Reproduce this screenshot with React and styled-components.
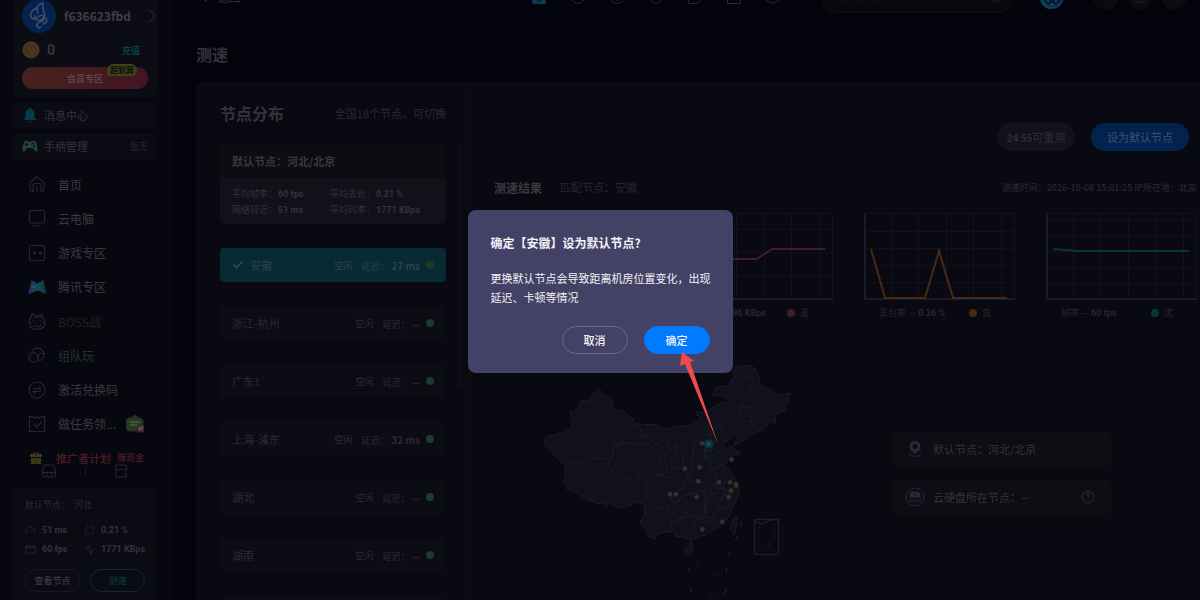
import React, { useState } from 'react';
import styled, { createGlobalStyle } from 'styled-components';
import { ChevronRight, ChevronLeft, Search, Gauge, Unlink, AppWindow, Activity, Check, CircleQuestionMark } from 'lucide-react';

const menu = [
    { label: '首页', icon: 'home' },
    { label: '云电脑', icon: 'pc' },
    { label: '游戏专区', icon: 'game' },
    { label: '腾讯专区', icon: 'tencent' },
    { label: 'BOSS战', icon: 'boss', color: '#2b1d23' },
    { label: '组队玩', icon: 'team', color: '#28322f' },
    { label: '激活兑换码', icon: 'code' },
    { label: '做任务领...', icon: 'task', gift: true },
];

const nodes = [
    { name: '安徽', delay: '27 ms', dot: '#21392b' },
    { name: '浙江-杭州', delay: '--' },
    { name: '广东1', delay: '--' },
    { name: '上海-浦东', delay: '32 ms' },
    { name: '湖北', delay: '--' },
    { name: '湖南', delay: '--' },
    { name: '江苏', delay: '--' },
];

const charts = [
    { label: '延迟', value: '27 ms', level: '优', color: '#08343b', rows: [17, 34, 51, 68], line: '7,36 143,36' },
    { label: '码率', value: '896 KBps', level: '差', color: '#421b2f', rows: [16, 39, 62], line: '7,46 68,46 75,46 90,36 98,36 143,36' },
    { label: '丢包率', value: '0.26 %', level: '良', color: '#482a12', rows: [18, 35, 52, 69], line: '7,36 21,85 61,85 75,38 89,85 143,85' },
    { label: '帧率', value: '60 fps', level: '优', color: '#08343b', rows: [7, 22, 38, 54, 70], line: '7,36 20,37 32,38 143,38' },
];

const points = [
    [516, 265], [605, 314], [465, 341], [509, 337], [505, 378], [567, 382], [600, 382], [618, 387], [619, 392],
    [603, 407], [596, 426], [420, 418], [438, 418], [500, 426], [577, 500], [517, 523],
];

function MenuIcon({ type }) {
    if (type === 'home') return (
        <svg viewBox="0 0 18 18"><path d="M2 7.2 9 1.8l7 5.400V15q0 1.500-1.500 1.500H13V10q0-1.500-1.500-1.500h-5Q5 8.500 5 10v6.500H3.500Q2 16.500 2 15zM9 11.500v5" /></svg>
    );
    if (type === 'pc') return (
        <svg viewBox="0 0 18 18"><rect x="1.500" y="1.500" width="15" height="12.500" rx="1.500" /><path d="M5 16.800h8" /></svg>
    );
    if (type === 'game') return (
        <svg viewBox="0 0 18 18"><rect x="1.500" y="1.500" width="15" height="15" rx="1.500" /><path d="M4.500 9h4M6.500 7v4" /><circle cx="12.500" cy="9" r="1" /></svg>
    );
    if (type === 'tencent') return (
        <svg viewBox="0 0 18 18">
            <defs>
                <linearGradient id="tx" x1="0" x2="1">
                    <stop offset="0" stopColor="#1f2560" />
                    <stop offset=".4" stopColor="#134759" />
                    <stop offset="1" stopColor="#0a4247" />
                </linearGradient>
            </defs>
            <path stroke="none" fill="url(#tx)" d="M3.500 2 9 5.500 15.500 2 18 16l-8-3.500L0 16z" />
            <path stroke="none" fill="#245c63" d="m4 7 4 1-3 3z" />
        </svg>
    );
    if (type === 'boss') return (
        <svg viewBox="0 0 18 18"><path d="M3.500 4.500 4 1.500 6.500 3 7 5.500l2-.5.500-2L11 5l3-2.500-.5 2.500q3.500 1.500 3.500 5 0 7-8 7.500-8-.5-8-7 0-3.500 2.500-6zM5 8v1.500m7.500-2v2M5.500 13l2 1.500h4l2-2.500M3 10.500v1.500m12-3v1.500M7 10l1 1" /></svg>
    );
    if (type === 'team') return (
        <svg viewBox="0 0 18 18"><path d="M3.500 6.500A6.500 6.500 0 1 1 11 15" /><circle cx="5.500" cy="11.500" r="4.800" /><path d="M3 11h1.500M8 8.500l3 .5-1.500 3M12 7.500h3" /></svg>
    );
    if (type === 'code') return (
        <svg viewBox="0 0 18 18"><circle cx="9" cy="9" r="8" /><path d="M5 7.800h8L10.500 5.500M13 10.500H5l2.500 2.300" /></svg>
    );
    return (
        <svg viewBox="0 0 18 18"><path d="M1.500 1.500h3l2 2 2.500-2 2.500 2 2-2h3v15h-15zM5.500 9l3 3 5-5" /></svg>
    );
}

function ChinaMap() {
    return (
        <MapSvg viewBox="0 0 810 735" role="img" aria-label="节点地图">
            <g fill="#11111d" stroke="#1b1b29" strokeWidth="3" strokeLinejoin="round">
                <path d="M40 262 48 256 46 246 60 241 78 239 84 234 102 232 124 216 128 200 123 186 121 170 134 167 145 166 149 150 152 138 165 136 179 136 184 124 192 112 200 110 206 102 212 106 213 117 228 122 240 132 249 142 247 156 250 163 268 165 285 170 298 184 308 190 314 203 322 206 340 208 365 208 382 210 398 218 415 222 428 216 452 212 474 213 490 208 502 198 512 196 507 184 500 180 500 168 512 172 530 170 545 160 555 155 574 143 600 140 592 132 580 125 565 120 550 125 549 118 558 96 572 93 588 95 602 84 604 74 614 67 611 56 607 48 614 36 632 34 650 31 664 34 678 43 682 58 688 72 692 94 708 98 730 108 734 116 752 121 764 117 781 115 776 128 774 142 768 150 764 166 750 170 738 176 736 196 735 208 724 197 712 212 698 222 690 228 672 233 660 244 642 256 624 264 612 272 616 260 624 246 622 238 606 240 596 252 588 262 578 266 580 277 592 280 606 276 618 286 630 291 631 298 614 300 600 308 588 320 582 334 596 342 606 356 612 370 621 384 614 392 628 402 625 414 618 440 606 458 604 472 594 486 584 502 570 510 560 522 540 530 526 540 508 544 498 550 486 550 486 566 480 570 479 552 466 550 452 544 440 545 428 530 412 530 392 536 378 540 378 552 366 548 354 543 352 528 343 518 334 510 331 500 338 490 343 478 344 462 340 446 316 440 304 450 286 456 275 460 262 458 252 450 240 446 230 446 227 454 222 445 204 446 190 440 170 434 146 416 128 406 110 402 108 392 100 382 106 362 104 342 110 336 96 320 86 316 74 302 66 290 50 276z" />
                <path d="M470 576l12-8 9 4-2 14-10 15-14-1-3-12zM613 488l10-1-2 20-8 32-11-15 0-18z" />
                <g fill="none">
                    <path d="M108 338l12-16 40 0 24-14 34 4 14-4 14 4 4-32 24-10 10-26 24-24 8-14M244 270l56-6 24 6 30-2 24 16 14 18-2 20-8 18-12 6 18 16-14 2-20-16-20-8-8 10 8 18-20 10-26-10-34-14-18-20-2-24" />
                    <path d="M322 206l10 16-2 18 16 8 16-4 14 22 20 14 10 18-6 22 12 14-4 16-14 12-16-4M330 240l20-4M376 270l20-16 20 12 0 18 14-2 6-18 8 12-8 26-16 10 4 22 26 8 12-14-6-22 14-8 12 10 10-20-8-18 20-12 10-10 24-10 16-4" />
                    <path d="M540 258l2-22-10-14 12-10 14 10 10-16 14 8-8 16 18 14M595 218l36-12 20-8 14 2-2-20-18-4 4-20-24-4M556 262l-18 2-12 16 0 30-18 22-16 4-10 16-10 10 2 14-20 8-22-16-28 0-16-12" />
                    <path d="M612 50l16 8 2 10 18 0 22-2 0 14-10 12 0 18-28 18 6 18 16 8 0 10M638 154l-14 0 4 16 10 10M638 154l30 4 16 18 16 4 14 14 22 2M668 200l4 24M486 350l2-32 4-38 16-14M524 282l0 28 24-4 14-16 18-4M526 310l16 14 0 14 18 4 16-18M508 336l28 12 14-6 8 14-4 16 14 14 10 14 18 6 12-10 16 2M486 352l-16 12 6 16 22 6 26-6 22 12 10-6 12 18-12 12-26-10-24 4-20 8-24 0-14 18M464 380l-10 24-20 10-12 14 8 18 22-16 18 12-8 14 12 14-8 16-26-2-20-12-6-14 8-14M462 424l20-12 24 8 18-10 4 24-6 44-18 12-24-10M548 414l-16 20-4 28 2 24 20 4 12-28 12-36 14-12-14-14-24-2M576 416l14 8 8 22-10 14-24 2M346 372l4 26-2 34 18 10 18 16 20-2 10 18-10 12 18 12 4 22M426 502l20-8 26-8 24-6M500 486l-6 22-20 26-8 14M530 486l-26 4 18 12 20-6 18 12 14-10M556 360l20-6 10 20-6 26" />
                </g>
            </g>
            <g fill="none" stroke="#242433" strokeWidth="3">
                <path d="M635 500l-3 16M623 544l-7 14M601 588l-6 16M589 636v18M473 634l6 14M483 698v14M588 702l-5 16" />
                <path d="M674 493h72v105h-72zM676 498l16 8 26-8 14-4M746 496l-10 12" />
                <path d="M690 512l-3 10M688 540l3 10M734 516l-2 12M734 542l-3 12M722 564l-8 12M706 584l-8 4" strokeWidth="2" />
                <path d="M500 620l8 3M498 632l12 2M556 628l6 8M560 556h4M644 478h5M548 660h12M530 720h20M556 712l12-6M536 728l12 3M566 720h8" strokeDasharray="3 4" />
            </g>
            <g fill="#3d2e28">
                {points.map(([x, y]) => <circle key={`${x}-${y}`} cx={x} cy={y} r="7" />)}
            </g>
            <circle cx="536" cy="267" r="14" fill="#0b353d" />
            <circle cx="536" cy="267" r="6" fill="#2a474e" />
            <path d="M527 280c-14 10 32 12 18 0" fill="none" stroke="#0b353d" strokeWidth="3" />
        </MapSvg>
    );
}

function Chart({ data }) {
    return (
        <ChartBox>
            <svg viewBox="0 0 151 87" preserveAspectRatio="none">
                <g stroke="#11111d" strokeWidth="1">
                    {[27, 54, 82, 109, 137, 150].map(x => <line key={x} x1={x + 0.5} x2={x + 0.5} y1="0" y2="86" />)}
                    {[0, ...data.rows].map(y => <line key={y} x1="0" x2="151" y1={y + 0.5} y2={y + 0.5} />)}
                </g>
                <path d="M1 0v86h150" fill="none" stroke="#1a1a2c" strokeWidth="2" />
                <polyline points={data.line} fill="none" stroke={data.color} strokeWidth="2" />
            </svg>
            <Legend>
                <span>{data.label} — <Num>{data.value}</Num></span>
                <Dot color={data.color} />
                {data.level}
            </Legend>
        </ChartBox>
    );
}

export default function App() {
    const [selected, setSelected] = useState('安徽');
    const [open, setOpen] = useState(true);
    return (
        <Page>
            <GlobalStyle />
            <Sidebar>
                <Profile>
                    <User>
                        <Avatar viewBox="0 0 34 34">
                            <circle cx="17" cy="17" r="17" fill="#04224f" />
                            <path d="M21 4c-6 1-7 6-5 10m5-10c-1 4 0 6 1 9 2 5-1 7-4 8-4 1-6-1-5-4M14 9c-5 3-7 7-4 10 2 2 4 1 6-1 3-3 6-2 6 1 0 4-4 3-6 5-3 3 1 6 3 4m5-9c2 3 0 5-3 6" fill="none" stroke="#3c4e68" strokeWidth="1.600" strokeLinecap="round" />
                        </Avatar>
                        <strong>f636623fbd</strong>
                        <ChevronRight size={26} strokeWidth={1.2} />
                    </User>
                    <Balance>
                        <svg viewBox="0 0 18 18"><circle cx="9" cy="9" r="8.500" fill="#4a381f" /><circle cx="9" cy="9" r="6.500" fill="#43321b" /><path d="M10 4c-3 2-4 4-2 6s1 4 0 4m2-7c2 1 2 4 0 6" fill="none" stroke="#56432a" /></svg>
                        <Num>0</Num>
                        <a href="#recharge">充值</a>
                    </Balance>
                    <Vip>会员专区<Badge>超划算</Badge></Vip>
                </Profile>
                <Quick href="#message">
                    <svg viewBox="0 0 16 16"><path d="M7 1h2v1q3.500 1 3.500 5v4l2 1.500v.5h-13v-.5l2-1.500V7Q3.500 3 7 2zM6.500 14h3l-1.500 2z" fill="#083b49" /></svg>
                    消息中心
                </Quick>
                <Quick href="#gamepad">
                    <svg viewBox="0 0 16 16"><path d="M3 3q2-1 3 .5h4Q11 2 13 3q2.500 2 2.500 9 0 2-2 1.500L10.500 10h-5l-3 3.500Q.5 14 .5 12 .5 5 3 3z" fill="#24403a" /><path d="M3 6.500h3M4.500 5v3" stroke="#0d0d15" /><circle cx="11" cy="5.500" r="1" fill="#0d0d15" /><circle cx="12" cy="8" r="1" fill="#0d0d15" /></svg>
                    手柄管理
                    <small>暂无</small>
                </Quick>
                <Menu>
                    {menu.map(m =>
                        <MenuItem key={m.label} href={`#${m.icon}`} color={m.color}>
                            <MenuIcon type={m.icon} />
                            {m.label}
                            {m.gift && <Gift viewBox="0 0 18 18"><path d="m9 0 5 4H4z" fill="#52300e" /><rect x="0" y="3" width="17" height="13" rx="4" fill="#263c1f" /><path d="M4 7h10M4 10h7" stroke="#46603e" strokeWidth="1.500" /><rect x="11" y="10" width="7" height="7" rx="2" fill="#4e342b" /><path d="m13 13 1.500 1.500L17 12" fill="none" stroke="#6d5a55" /></Gift>}
                        </MenuItem>
                    )}
                </Menu>
                <Promo href="#promo">
                    <svg viewBox="0 0 14 14"><path d="M1 3h12v3H1zM2 7h10v6H2z" fill="#30420f" /><path d="M6 3h2v10H6zM7 3Q3 3 4 1q2-1 3 2 1-3 3-2 1 2-3 2" fill="#4c1c24" /></svg>
                    推广者计划<small>赚现金</small>
                </Promo>
                <Tools>
                    <button aria-label="云硬盘"><svg viewBox="0 0 14 14"><path d="M3 1h8q1.500 0 1.500 1.500l1 6v3q0 1.500-1.500 1.500H2Q.5 13 .5 11.500v-3l1-6Q1.500 1 3 1zM.5 8.500h13M3 11h3m3 0h2" /></svg></button>
                    <i />
                    <button aria-label="商城"><svg viewBox="0 0 14 14"><path d="M2 1h10l1.500 3.500q-1 2-3 .5-1.500 2-3.500 0-2 2-3.500 0-2 1.500-3-.5zM2 6v7h10V6" /></svg></button>
                </Tools>
                <Status>
                    <p>默认节点：<span>河北</span></p>
                    <Stats>
                        <Num><Gauge />51 ms</Num>
                        <Num><Unlink />0.21 %</Num>
                        <Num><AppWindow />60 fps</Num>
                        <Num><Activity />1771 KBps</Num>
                    </Stats>
                    <StatusButtons>
                        <SmallButton>查看节点</SmallButton>
                        <SmallButton $active>测速</SmallButton>
                    </StatusButtons>
                </Status>
            </Sidebar>

            <Main>
                <Header>
                    <Back><ChevronLeft size={16} />返回</Back>
                    <HeaderIcons>
                        <svg viewBox="0 0 14 14"><rect width="14" height="14" rx="2" fill="#0a3a50" stroke="none" /><path d="M5 11h4" stroke="#03121c" /></svg>
                        <svg viewBox="0 0 14 14"><circle cx="7" cy="7" r="6.500" /></svg>
                        <svg viewBox="0 0 14 14"><circle cx="7" cy="7" r="6.500" /><path d="M7 8v3" /></svg>
                        <svg viewBox="0 0 14 14"><circle cx="7" cy="7" r="6.500" /></svg>
                        <svg viewBox="0 0 14 14"><path d="M.5 13.500V6a6.500 6.500 0 1 1 6.500 7.500z" /></svg>
                        <svg viewBox="0 0 14 14"><rect x=".5" y=".5" width="13" height="13" /></svg>
                        <svg viewBox="0 0 14 14"><path d="m7 .5 6.500 3v7L7 13.500l-6.500-3v-7z" /></svg>
                    </HeaderIcons>
                    <SearchBox>
                        <input aria-label="搜索" placeholder="搜索游戏" />
                        <Search size={13} />
                    </SearchBox>
                    <Robot viewBox="0 0 26 26">
                        <circle cx="13" cy="13" r="10.500" fill="#061a35" stroke="#103654" strokeWidth="3" />
                        <path d="M2 14q2 8 9 10" fill="none" stroke="#0b444a" strokeWidth="3" />
                        <path d="M24 10q1 5-2 8" fill="none" stroke="#331c52" strokeWidth="2" />
                        <path d="M9 14v4m8-4v4m-6 2 2 1 2-1" fill="none" stroke="#235272" strokeWidth="1.500" />
                    </Robot>
                    <RoundButton aria-label="下载" />
                    <RoundButton aria-label="窗口"><svg viewBox="0 0 14 14"><rect x="1.500" y="4" width="11" height="8" rx="1" /></svg></RoundButton>
                    <RoundButton aria-label="设置"><svg viewBox="0 0 14 14"><path d="M2 11l3-6 4 0 3 6" /></svg></RoundButton>
                </Header>
                <Title>测速</Title>
                <Panel>
                    <NodeColumn>
                        <NodeHead>
                            <h2>节点分布</h2>
                            <span>全国18个节点，可切换</span>
                        </NodeHead>
                        <NodeScroll>
                            <NodeList>
                                <DefaultCard>
                                    <h3>默认节点：河北/北京</h3>
                                    <div>
                                        <span>平均帧率：<Num>60 fps</Num></span>
                                        <span>平均丢包：<Num>0.21 %</Num></span>
                                        <span>网络延迟：<Num>51 ms</Num></span>
                                        <span>平均码率：<Num>1771 KBps</Num></span>
                                    </div>
                                </DefaultCard>
                                {nodes.map(n =>
                                    <NodeRow key={n.name} $active={n.name === selected} onClick={() => setSelected(n.name)}>
                                        {n.name === selected && <Check size={12} strokeWidth={4} />}
                                        <span>{n.name}</span>
                                        <small>空闲</small>
                                        <small>延迟：<b>{n.delay}</b></small>
                                        <Dot color={n.dot || '#1e3a2b'} />
                                    </NodeRow>
                                )}
                            </NodeList>
                            <Thumb />
                        </NodeScroll>
                    </NodeColumn>

                    <Result>
                        <Actions>
                            <Pill disabled><Num>24:55</Num>可重测</Pill>
                            <Pill $primary onClick={() => setOpen(true)}>设为默认节点</Pill>
                        </Actions>
                        <ResultHead>
                            <h2>测速结果</h2>
                            <span>匹配节点：安徽</span>
                            <small>测速时间：2026-10-08 15:01:25 IP所在地：北京</small>
                        </ResultHead>
                        <Charts>
                            {charts.map(c => <Chart key={c.label} data={c} />)}
                        </Charts>
                        <MapArea>
                            <ChinaMap />
                            <InfoList>
                                <Info>
                                    <svg viewBox="0 0 20 20"><path d="M10 2a5.500 5.500 0 0 1 5.500 5.500C15.500 11 12 13 10 15.500 8 13 4.500 11 4.500 7.500A5.500 5.500 0 0 1 10 2zm0 3a2.500 2.500 0 1 0 .01 0z" fill="#28283e" stroke="none" /><path d="M5.500 13.500C-1 18.500 21 18.500 14.500 13.500" /></svg>
                                    默认节点：河北/北京
                                </Info>
                                <Info>
                                    <svg viewBox="0 0 20 20"><circle cx="10" cy="10" r="9" /><path d="M7 5h6q1 0 1.500 1l.5 4H5l.5-4Q6 5 7 5z" fill="#28283e" /><path d="M5 11v3h10v-3" /><circle cx="10" cy="7.500" r="1" fill="#0e0e16" stroke="none" /></svg>
                                    云硬盘所在节点：--
                                    <button aria-label="说明"><CircleQuestionMark /></button>
                                </Info>
                            </InfoList>
                        </MapArea>
                    </Result>
                </Panel>
            </Main>

            {open &&
                <Overlay>
                    <Modal role="dialog" aria-modal="true" aria-labelledby="modal-title">
                        <h2 id="modal-title">确定【安徽】设为默认节点?</h2>
                        <p>更换默认节点会导致距离机房位置变化，出现延迟、卡顿等情况</p>
                        <div>
                            <ModalButton onClick={() => setOpen(false)}>取消</ModalButton>
                            <ModalButton $primary onClick={() => setOpen(false)}>确定</ModalButton>
                        </div>
                        <Arrow viewBox="0 0 40 92"><path d="M2 0 0 14l5-2L38 92 10 10l4-1z" fill="#f04a4a" /></Arrow>
                    </Modal>
                </Overlay>
            }
        </Page>
    );
}

const GlobalStyle = createGlobalStyle`
    * {
        box-sizing: border-box;
    }
    body {
        margin: 0;
        background: #03030b;
        font-family: 'Noto Sans CJK SC', sans-serif;
        font-size: 11px;
        color: #33333e;
    }
    h2, h3, p {
        margin: 0;
    }
    button, input {
        font: inherit;
        color: inherit;
        padding: 0;
        border: 0;
        background: none;
    }
    button {
        cursor: pointer;
    }
    a {
        color: inherit;
        text-decoration: none;
    }
    svg {
        flex: none;
    }
`;

const Page = styled.div`
    display: flex;
    height: 100vh;
    overflow: hidden;
`;

const Num = styled.b`
    font-family: Roboto, sans-serif;
`;

const Dot = styled.i`
    flex: none;
    width: 8px;
    height: 8px;
    border-radius: 50%;
    background: ${p => p.color};
`;

const Sidebar = styled.aside`
    flex: none;
    display: flex;
    flex-direction: column;
    width: 173px;
    padding: 0 16px 0 13px;
    background: #07070f;
`;

const Profile = styled.div`
    flex: none;
    margin-top: -17px;
    padding: 16px 9px 9px;
    border-radius: 6px;
    background: #0c0c14;
`;

const User = styled.div`
    display: flex;
    align-items: center;
    gap: 8px;
    margin-right: -8px;
    color: #22223a;
    strong {
        width: 68px;
        font-size: 12px;
        line-height: 34px;
        color: #3e3e47;
    }
`;

const Avatar = styled.svg`
    width: 34px;
    height: 34px;
`;

const Balance = styled.div`
    display: flex;
    align-items: center;
    height: 34px;
    gap: 7px;
    padding-right: 8px;
    svg {
        width: 18px;
    }
    b {
        flex: 1;
        font-size: 14px;
        color: #43322a;
    }
    a {
        font-size: 9px;
        font-weight: 700;
        color: #083f48;
    }
`;

const Vip = styled.button`
    position: relative;
    display: block;
    width: 100%;
    height: 22px;
    border-radius: 11px;
    background: linear-gradient(90deg, #46221d, #441424);
    font-size: 9px;
    font-weight: 700;
    color: #5e434a;
`;

const Badge = styled.span`
    position: absolute;
    top: -3px;
    right: 11px;
    padding: 0 3px;
    border-radius: 6px 6px 6px 0;
    background: #3e4119;
    font-size: 8px;
    line-height: 12px;
    color: #0f0f0c;
`;

const Quick = styled.a`
    flex: none;
    display: flex;
    align-items: center;
    gap: 6px;
    height: 27px;
    margin-top: 4px;
    padding: 0 9px 1px;
    border-radius: 6px;
    background: #0b0b13;
    svg {
        width: 16px;
    }
    small {
        margin-left: auto;
        font-size: 9px;
        color: #242434;
    }
`;

const Menu = styled.nav`
    flex: none;
    display: flex;
    flex-direction: column;
    height: 274px;
    margin-top: 7px;
`;

const MenuItem = styled.a`
    flex: 1;
    display: flex;
    align-items: center;
    gap: 12px;
    padding-left: 15px;
    font-size: 12px;
    white-space: nowrap;
    color: ${p => p.color || '#3a3a42'};
    svg {
        width: 18px;
        fill: none;
        stroke: #25253a;
        stroke-width: 1.2;
    }
`;

const Gift = styled.svg`
    margin-left: -2px;
`;

const Promo = styled.a`
    flex: none;
    display: flex;
    align-items: center;
    height: 23px;
    margin-top: 5px;
    padding-left: 16px;
    font-weight: 500;
    white-space: nowrap;
    color: #4c1d22;
    svg {
        width: 14px;
        margin-right: 13px;
    }
    small {
        margin-left: 6px;
        font-size: 9px;
    }
`;

const Tools = styled.div`
    flex: none;
    display: flex;
    align-items: center;
    justify-content: space-between;
    height: 14px;
    margin-top: -5px;
    padding: 0 29px;
    button {
        height: 14px;
    }
    svg {
        display: block;
        width: 14px;
        fill: none;
        stroke: #29293b;
    }
    i {
        width: 1px;
        height: 8px;
        background: #1b1b28;
    }
`;

const Status = styled.div`
    flex: none;
    margin-top: 10px;
    padding: 9px 12px 14px;
    border-radius: 6px;
    background: #0b0b13;
    font-size: 9px;
    p {
        line-height: 16px;
        color: #2a2a37;
    }
    span {
        margin-left: 4px;
    }
`;

const Stats = styled.div`
    display: grid;
    grid-template-columns: 59px 1fr;
    margin: 8px 0 10px;
    line-height: 19px;
    white-space: nowrap;
    b {
        display: flex;
        align-items: center;
        gap: 6px;
        color: #33333f;
    }
    svg {
        width: 11px;
        height: 11px;
        color: #262638;
    }
`;

const StatusButtons = styled.div`
    display: flex;
    gap: 10px;
`;

const SmallButton = styled.button`
    flex: 0 0 55px;
    height: 23px;
    border: 1px solid ${p => p.$active ? '#072f38' : '#181828'};
    border-radius: 12px;
    font-weight: 500;
    color: ${p => p.$active ? '#083740' : '#3b3b43'};
`;

const Main = styled.main`
    flex: 1;
    min-width: 0;
    display: flex;
    flex-direction: column;
    padding-left: 23px;
`;

const Header = styled.header`
    flex: none;
    display: flex;
    align-items: center;
    height: 32px;
    margin-top: -19px;
    padding-right: 13px;
`;

const Back = styled.button`
    display: flex;
    align-items: center;
    gap: 6px;
`;

const HeaderIcons = styled.div`
    display: flex;
    gap: 25px;
    margin-left: auto;
    svg {
        width: 14px;
        fill: none;
        stroke: #282833;
    }
`;

const SearchBox = styled.label`
    display: flex;
    align-items: center;
    width: 194px;
    height: 31px;
    margin-left: 40px;
    padding: 0 12px 0 17px;
    border: 1px solid #0f0f18;
    border-radius: 16px;
    background: #08080f;
    color: #1d1d30;
    input {
        flex: 1;
        min-width: 0;
        outline: none;
    }
    input::placeholder {
        color: #11111a;
    }
`;

const Robot = styled.svg`
    width: 26px;
    margin: 0 28px 0 25px;
`;

const RoundButton = styled.button`
    flex: none;
    display: grid;
    place-items: center;
    width: 26px;
    height: 26px;
    border-radius: 50%;
    background: #0a0a11;
    & + & {
        margin-left: 8px;
    }
    svg {
        width: 14px;
        fill: none;
        stroke: #22222b;
    }
`;

const Title = styled.h2`
    margin: 29px 0 16px;
    font-size: 16px;
    line-height: 24px;
`;

const Panel = styled.section`
    flex: 1;
    display: flex;
    min-height: 0;
    border-radius: 6px 0 0 0;
    background: #090911;
`;

const NodeColumn = styled.div`
    flex: none;
    display: flex;
    flex-direction: column;
    width: 275px;
    padding: 19px 6px 0 24px;
    border-right: 2px solid #0c0c14;
`;

const NodeHead = styled.div`
    flex: none;
    display: flex;
    align-items: center;
    justify-content: space-between;
    margin: 0 17px 19px 0;
    line-height: 24px;
    h2 {
        font-size: 16px;
    }
    span {
        color: #2a2a35;
    }
`;

const NodeScroll = styled.div`
    flex: 1;
    display: flex;
    align-items: flex-start;
    justify-content: space-between;
    min-height: 0;
    overflow: hidden;
`;

const Thumb = styled.div`
    width: 6px;
    height: 244px;
    border-radius: 3px;
    background: #0d0d16;
`;

const NodeList = styled.div`
    display: flex;
    flex-direction: column;
    gap: 24px;
    width: 226px;
`;

const DefaultCard = styled.div`
    border-radius: 6px;
    overflow: hidden;
    background: #0c0c13;
    h3 {
        padding-left: 12px;
        font-size: 11px;
        line-height: 34px;
        color: #383841;
    }
    div {
        display: grid;
        grid-template-columns: 98px 1fr;
        padding: 8px 12px 6px;
        background: #111119;
        font-size: 9px;
        line-height: 16px;
        white-space: nowrap;
    }
    b {
        margin-left: 1px;
    }
`;

const NodeRow = styled.button`
    flex: none;
    display: flex;
    align-items: center;
    gap: 6px;
    height: 34px;
    padding: 0 12px;
    border-radius: 4px;
    background: ${p => p.$active ? '#072a33' : '#0c0c14'};
    color: ${p => p.$active ? '#2c434b' : '#2b2b35'};
    small {
        font-size: 9px;
        margin-left: 3px;
    }
    span {
        flex: 1;
        text-align: left;
    }
    b {
        margin-left: 3px;
        font-size: 10px;
    }
`;

const Result = styled.div`
    flex: 1;
    min-width: 0;
    padding: 41px 3px 0 23px;
`;

const Actions = styled.div`
    display: flex;
    justify-content: flex-end;
    gap: 16px;
    padding-right: 8px;
`;

const Pill = styled.button`
    min-width: ${p => p.$primary ? '98px' : '78px'};
    height: 28px;
    border-radius: 14px;
    background: ${p => p.$primary ? '#022350' : '#12121f'};
    color: ${p => p.$primary ? '#42516a' : '#30303c'};
    b {
        font-weight: 500;
        font-size: 10px;
    }
`;

const ResultHead = styled.div`
    display: flex;
    align-items: center;
    margin: 26px 0 15px;
    line-height: 21px;
    color: #26263b;
    h2 {
        margin-right: 18px;
        font-size: 12px;
        color: #3a3a41;
    }
    small {
        margin-left: auto;
        font-size: 9px;
        font-weight: 500;
    }
`;

const Charts = styled.div`
    display: grid;
    grid-template-columns: repeat(4, 1fr);
    gap: 31px;
    padding-left: 6px;
`;

const ChartBox = styled.div`
    svg {
        display: block;
        width: 100%;
        height: 87px;
    }
`;

const Legend = styled.div`
    display: flex;
    align-items: center;
    gap: 5px;
    margin: 5px 0 0 15px;
    font-size: 9px;
    line-height: 16px;
    white-space: nowrap;
    color: #272733;
    span {
        flex: 0 0 85px;
    }
`;

const MapArea = styled.div`
    display: flex;
    justify-content: space-between;
    margin-top: 34px;
    padding: 0 86px 0 36px;
`;

const MapSvg = styled.svg`
    width: 270px;
    height: 245px;
`;

const InfoList = styled.div`
    display: flex;
    flex-direction: column;
    gap: 14px;
    width: 218px;
    padding-top: 77px;
`;

const Info = styled.div`
    display: flex;
    align-items: center;
    gap: 8px;
    height: 34px;
    padding: 0 16px 0 12px;
    border-radius: 4px;
    background: #0d0d14;
    svg {
        width: 20px;
        fill: none;
        stroke: #28283a;
    }
    button {
        display: flex;
        margin-left: auto;
    }
    button svg {
        width: 14px;
        height: 14px;
    }
`;

const Overlay = styled.div`
    position: fixed;
    inset: 0;
    display: flex;
    align-items: center;
    justify-content: center;
    padding-bottom: 17px;
`;

const Modal = styled.div`
    position: relative;
    width: 265px;
    padding: 23px 21px 19px 23px;
    border-radius: 8px;
    background: #434165;
    color: #f3f3f8;
    h2 {
        font-size: 12px;
        line-height: 20px;
    }
    p {
        margin: 16px 0 19px;
        line-height: 19px;
    }
    div {
        display: flex;
        justify-content: flex-end;
        gap: 16px;
        padding-right: 2px;
    }
`;

const ModalButton = styled.button`
    width: 66px;
    height: 28px;
    border: 1px solid ${p => p.$primary ? '#007bff' : '#68659a'};
    border-radius: 14px;
    background: ${p => p.$primary ? '#007bff' : 'transparent'};
    font-weight: 500;
`;

const Arrow = styled.svg`
    position: absolute;
    top: 142px;
    left: 212px;
    width: 40px;
    pointer-events: none;
`;
